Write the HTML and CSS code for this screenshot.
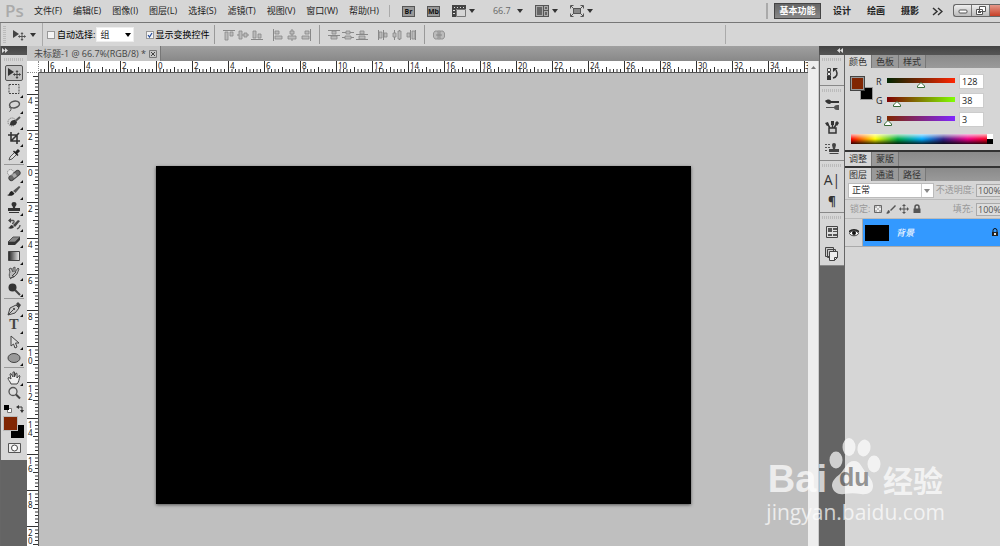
FILE: index.html
```
<!DOCTYPE html>
<html lang="zh-CN">
<head>
    <meta charset="UTF-8">
    <meta name="viewport" content="width=device-width, initial-scale=1.0">
    <title>未标题-1 @ 66.7%(RGB/8)</title>
    <link rel="stylesheet" href="styles.css">
</head>
<body>

    <header class="menubar">
        <span class="logo">Ps</span>
        <nav class="menus">
            <button>文件(F)</button>
            <button>编辑(E)</button>
            <button>图像(I)</button>
            <button>图层(L)</button>
            <button>选择(S)</button>
            <button>滤镜(T)</button>
            <button>视图(V)</button>
            <button>窗口(W)</button>
            <button>帮助(H)</button>
        </nav>
        <div class="app-tools">
            <button class="app-badge">Br</button>
            <button class="app-badge">Mb</button>
            <button class="app-drop" aria-label="查看额外内容">
                <svg width="14" height="12" viewBox="0 0 14 12"><path fill="#444" d="M0 0h14v4H4v8H0z"/><path stroke="#ddd" d="M2 2.500h1M5 2.500h1M8 2.500h1M11 2.500h1M1 5.500h2M1 8.500h2"/><path fill="none" stroke="#777" d="M4.500 4.500h9v7h-9z"/></svg>
                <i class="caret"></i>
            </button>
            <button class="app-drop zoom-level">66.7<i class="caret"></i></button>
            <button class="app-drop" aria-label="排列文档">
                <svg width="14" height="12" viewBox="0 0 14 12"><path fill="#555" d="M0 0h14v12H0z"/><path fill="#aaa" d="M1 1h7v10H1zM9 1h4v4H9zM9 6h4v5H9z"/><path fill="#666" d="M2 2h5v8H2zM10 2h2v2h-2zM10 7h2v3h-2z"/></svg>
                <i class="caret"></i>
            </button>
            <button class="app-drop" aria-label="屏幕模式">
                <svg width="14" height="12" viewBox="0 0 14 12"><path fill="#555" d="M3 3h8v6H3z"/><path fill="#888" d="M4 4h6v4H4z"/><path fill="none" stroke="#555" d="M.5 3.500v-3h3M10.500.5h3v3M13.500 8.500v3h-3M3.500 11.500h-3v-3M1 1l2 2M13 1l-2 2M1 11l2-2M13 11l-2-2"/></svg>
                <i class="caret"></i>
            </button>
        </div>
        <nav class="workspaces">
            <button class="active">基本功能</button>
            <button>设计</button>
            <button>绘画</button>
            <button>摄影</button>
            <button class="more" aria-label="更多">
                <svg width="11" height="9" viewBox="0 0 11 9"><path fill="none" stroke="#333" stroke-width="1.500" d="M1 1l4 3.500L1 8M6 1l4 3.500L6 8"/></svg>
            </button>
        </nav>
        <div class="window-buttons">
            <button aria-label="最小化"><svg width="10" height="8" viewBox="0 0 10 8"><rect x="1" y="3" width="8" height="3" rx="1" fill="#fff" stroke="#555"/></svg></button>
            <button aria-label="还原"><svg width="10" height="9" viewBox="0 0 10 9"><path fill="#fff" stroke="#555" d="M3.500.5h6v5h-6zM.5 3.500h6v5h-6z"/><path fill="#555" d="M2 5h3v2H2z"/></svg></button>
            <button class="close" aria-label="关闭"></button>
        </div>
    </header>

    <div class="options">
        <i class="grip-v"></i>
        <button class="current-tool" aria-label="移动工具">
            <svg width="14" height="12" viewBox="0 0 14 12"><path fill="#444" d="M1 1l6 4-6 4z"/><path fill="none" stroke="#555" d="M10 4v7M6.500 7.500h7"/><path fill="#555" d="M8.500 5L10 3l1.500 2zM8.500 10l1.500 2 1.500-2zM8 6v3L6 7.500zM12 6v3l2-1.500z"/></svg>
            <i class="caret"></i>
        </button>
        <label class="auto-select"><input type="checkbox">自动选择:</label>
        <select aria-label="自动选择"><option>组</option><option>图层</option></select>
        <label class="transform"><input type="checkbox" checked>显示变换控件</label>
        <div class="align-group">
            <button aria-label="顶对齐"><svg viewBox="0 0 12 12"><path class="ln" d="M0 1.500h12"/><path class="bx" d="M2 3h3v8H2zM7 3h3v4H7z"/></svg></button>
            <button aria-label="垂直居中对齐"><svg viewBox="0 0 12 12"><path class="ln" d="M0 6h12"/><path class="bx" d="M2 2h3v8H2zM7 4h3v4H7z"/></svg></button>
            <button aria-label="底对齐"><svg viewBox="0 0 12 12"><path class="ln" d="M0 10.500h12"/><path class="bx" d="M2 2h3v7H2zM7 5h3v4H7z"/></svg></button>
            <i class="space"></i>
            <button aria-label="左对齐"><svg viewBox="0 0 12 12"><path class="ln" d="M1.500 0v12"/><path class="bx" d="M3 2h4v3H3zM3 7h7v3H3z"/></svg></button>
            <button aria-label="水平居中对齐"><svg viewBox="0 0 12 12"><path class="ln" d="M6 0v12"/><path class="bx" d="M4 2h4v3H4zM2 7h8v3H2z"/></svg></button>
            <button aria-label="右对齐"><svg viewBox="0 0 12 12"><path class="ln" d="M10.500 0v12"/><path class="bx" d="M5 2h4v3H5zM2 7h7v3H2z"/></svg></button>
        </div>
        <div class="align-group">
            <button aria-label="按顶分布"><svg viewBox="0 0 12 12"><path class="ln" d="M0 1.500h12M0 6.500h12"/><path class="bx" d="M4 2h4v3H4zM3 7h6v3H3z"/></svg></button>
            <button aria-label="垂直居中分布"><svg viewBox="0 0 12 12"><path class="ln" d="M0 3.500h12M0 8.500h12"/><path class="bx" d="M4 2h4v3H4zM3 7h6v3H3z"/></svg></button>
            <button aria-label="按底分布"><svg viewBox="0 0 12 12"><path class="ln" d="M0 5.500h12M0 10.500h12"/><path class="bx" d="M4 2h4v3H4zM3 7h6v3H3z"/></svg></button>
            <i class="space"></i>
            <button aria-label="按左分布"><svg viewBox="0 0 12 12"><path class="ln" d="M1.500 1v10M6.500 1v10"/><path class="bx" d="M2 3h3v6H2zM7 4h3v4H7z"/></svg></button>
            <button aria-label="水平居中分布"><svg viewBox="0 0 12 12"><path class="ln" d="M3.500 1v10M8.500 1v10"/><path class="bx" d="M2 4h3v4H2zM7 2h3v8H7z"/></svg></button>
            <button aria-label="按右分布"><svg viewBox="0 0 12 12"><path class="ln" d="M5.500 1v10M10.500 1v10"/><path class="bx" d="M2 4h3v4H2zM7 2h3v8H7z"/></svg></button>
        </div>
        <div class="align-group">
            <button aria-label="自动对齐图层"><svg viewBox="0 0 12 12"><path class="bx" d="M2 2h3v8H2L.5 8V4zM7 2h3l1.500 2v4L10 10H7z"/><path class="ln" d="M6 1v10M3 6h6"/></svg></button>
        </div>
        <i class="options-end"></i>
    </div>

    <main class="workspace">
        <aside class="toolbox">
            <div class="toolbox-head"><svg width="6" height="5" viewBox="0 0 6 5"><path fill="#ddd" d="M0 0l3 2.500L0 5zM3 0l3 2.500L3 5z"/></svg></div>
            <div class="tools">
                <i class="grip-h"></i>
                <div class="tool-group six">
                    <button class="tool selected" aria-label="移动"><svg viewBox="0 0 14 14"><path fill="#333" d="M1 2l6 4-6 4z"/><path fill="none" stroke="#444" d="M10 5v7M6.500 8.500h7"/><path fill="#444" d="M8.500 6L10 4l1.500 2zM8.500 11l1.500 2 1.500-2zM8 7v3L6 8.500zM12 7v3l2-1.500z"/></svg></button>
                    <button class="tool more" aria-label="矩形选框"><svg viewBox="0 0 14 14"><path fill="none" stroke="#444" stroke-dasharray="2 1" d="M2 2.500h10v9H2z"/></svg></button>
                    <button class="tool more" aria-label="套索"><svg viewBox="0 0 14 14"><ellipse cx="7.500" cy="5.500" rx="5" ry="3.300" fill="none" stroke="#555" stroke-width="1.500" transform="rotate(-12 7.500 5.500)"/><path fill="none" stroke="#555" d="M3.500 7.500c-2 1 0 2 .5 1.500s0 3-1.500 3.500"/></svg></button>
                    <button class="tool more" aria-label="快速选择"><svg viewBox="0 0 14 14"><circle cx="5" cy="7" r="4" fill="none" stroke="#666" stroke-dasharray="1 1"/><path fill="#333" d="M3 10c0-4 2-5 5-5l2 2c-1 4-4 4-7 3z"/><path stroke="#555" stroke-width="2" d="M8.500 6L13 2"/></svg></button>
                    <button class="tool more" aria-label="裁剪"><svg viewBox="0 0 14 14"><path fill="none" stroke="#333" stroke-width="1.600" d="M4 1v9h9M1 4h9v9M4 10l8-8"/></svg></button>
                    <button class="tool more" aria-label="吸管"><svg viewBox="0 0 14 14"><path fill="#ddd" stroke="#555" d="M2 12l1-3 5-5 2 2-5 5z"/><path stroke="#222" stroke-width="3" d="M8.500 5.500L12 2"/><path stroke="#222" stroke-width="1.500" d="M6.500 3l4.500 4.500"/></svg></button>
                </div>
                <div class="tool-group eight">
                    <button class="tool more" aria-label="修复画笔"><svg viewBox="0 0 14 14"><rect x="1" y="5" width="13" height="5" rx="2.500" fill="#666" stroke="#444" transform="rotate(-40 7.500 7.500)"/><path fill="#aaa" d="M5 7l3-2 2 3-3 2z"/><circle cx="3.500" cy="4.500" r="3" fill="#eee" fill-opacity=".6" stroke="#777" stroke-dasharray="1 1"/></svg></button>
                    <button class="tool more" aria-label="画笔"><svg viewBox="0 0 14 14"><path fill="#222" d="M0 11c3 0 2-4 5-4l2.500 2.500C6 12 3 12.500 0 11z"/><path fill="#555" d="M6 7l6-5 1.500 1L8.500 9z"/></svg></button>
                    <button class="tool more" aria-label="仿制图章"><svg viewBox="0 0 14 14"><path fill="#333" d="M4.500 3a2.500 2 0 015 0c0 2-1.500 2-1.500 4h5v3H1V7h5C6 5 4.500 5 4.500 3zM2 11h10v1H2z"/></svg></button>
                    <button class="tool more" aria-label="历史记录画笔"><svg viewBox="0 0 14 14"><path fill="#333" d="M1 11c2 0 2-3 4-3l2 2c-1 2-4 2-6 1z"/><path fill="#444" d="M6 8l5-5 2 1-5 6z"/><path fill="none" stroke="#555" stroke-width="1.300" d="M2 3.500h4c2 0 1 3-1 3M10 12c2-1 3-2 3-4"/><path fill="#444" d="M4 1v5L1 3.500z"/></svg></button>
                    <button class="tool more" aria-label="橡皮擦"><svg viewBox="0 0 14 14"><path fill="#888" stroke="#555" d="M1 9l5-5h7l-5 5z"/><path fill="#333" d="M1 9h7v3H1zM8 9l5-5v3l-5 5z"/></svg></button>
                    <button class="tool more" aria-label="渐变"><svg viewBox="0 0 14 14"><defs><linearGradient id="toolFade"><stop stop-color="#222"/><stop offset="1" stop-color="#eee"/></linearGradient></defs><path fill="url(#toolFade)" stroke="#444" d="M1.500 2.500h11v9h-11z"/></svg></button>
                    <button class="tool more" aria-label="涂抹"><svg viewBox="0 0 14 14"><path fill="#bbb" stroke="#555" d="M3 12c-1-2-1-4 0-6L2 3l2-1 2 4V2l2-1v5l3-4 1 1-2 5-3 3z"/><path stroke="#444" d="M5 10l4-4M3 13l4-3"/></svg></button>
                    <button class="tool more" aria-label="减淡"><svg viewBox="0 0 14 14"><circle cx="5.500" cy="5.500" r="4" fill="#333"/><path stroke="#444" stroke-width="2" d="M8 8l5 5"/></svg></button>
                </div>
                <div class="tool-group four">
                    <button class="tool more" aria-label="钢笔"><svg viewBox="0 0 14 14"><path fill="#ccc" stroke="#444" d="M1 13l2-7 6-3 3 3-4 5zM1 13l5-5"/><path fill="#444" d="M9 2l2-2 3 3-2 3z"/><circle cx="7" cy="7" r="1" fill="#333"/></svg></button>
                    <button class="tool more type" aria-label="文字">T</button>
                    <button class="tool more" aria-label="路径选择"><svg viewBox="0 0 14 14"><path fill="#ddd" stroke="#444" d="M4 1v10l2.500-2L8 13l2-1-1.500-4H12z"/></svg></button>
                    <button class="tool more" aria-label="椭圆"><svg viewBox="0 0 14 14"><ellipse cx="7" cy="7" rx="6" ry="4.500" fill="#999" stroke="#444"/></svg></button>
                </div>
                <div class="tool-group two">
                    <button class="tool more" aria-label="抓手"><svg viewBox="0 0 14 14"><path fill="#eee" stroke="#444" d="M4 13C3 10 1 9 1 7l1-.5L4 8 3 3l1-.5L6 6V1h1.500v5L9 2l1 .5V7l2-2.500 1 .5c-1 3-1 6-3 8z"/></svg></button>
                    <button class="tool" aria-label="缩放"><svg viewBox="0 0 14 14"><circle cx="6" cy="5.500" r="4" fill="#ddd" stroke="#555" stroke-width="1.300"/><path stroke="#444" stroke-width="2" d="M9 8.500l4 4"/></svg></button>
                </div>
                <div class="swap">
                    <svg width="8" height="8" viewBox="0 0 8 8"><path fill="#fff" stroke="#777" d="M3.500 3.500h4v4h-4z"/><path d="M0 0h5v5H0z"/></svg>
                    <svg width="8" height="8" viewBox="0 0 8 8"><path fill="none" stroke="#333" d="M2 2h4v4"/><path fill="#333" d="M3 0v4L0 2zM4 5h4L6 8z"/></svg>
                </div>
                <div class="swatches tool-swatches"><i class="back"></i><i class="front"></i></div>
                <button class="mask" aria-label="快速蒙版"><svg width="13" height="10" viewBox="0 0 13 10"><path fill="#eee" stroke="#555" d="M.5.5h12v9H.5z"/><circle cx="6.500" cy="5" r="3" fill="#fff" stroke="#444"/></svg></button>
            </div>
        </aside>

        <section class="document">
            <div class="doc-tabs">
                <div class="doc-tab">未标题-1 @ 66.7%(RGB/8) *
                    <button aria-label="关闭文档"><svg width="8" height="8" viewBox="0 0 8 8"><path fill="none" stroke="#777" d="M.5.5h7v7h-7z"/><path stroke="#444" d="M2 2l4 4M6 2L2 6"/></svg></button>
                </div>
            </div>
            <div class="doc-body">
                <div class="corner"></div>
                <div class="ruler-x">
                    <svg class="ticks" width="100%" height="11"><defs><pattern id="ticksX" patternUnits="userSpaceOnUse" x="9" y="0" width="36" height="11"><path stroke="#333" d="M4 8v3M7.500 8v3M11 8v3M14.500 8v3M18.500 6v5M22 8v3M25.500 8v3M29 8v3M32.500 8v3"/></pattern></defs><rect width="100%" height="11" fill="url(#ticksX)"/></svg>
                    <span>6</span><span>4</span><span>2</span><span>0</span><span>2</span><span>4</span><span>6</span><span>8</span><span>10</span><span>12</span><span>14</span><span>16</span><span>18</span><span>20</span><span>22</span><span>24</span><span>26</span><span>28</span><span>30</span><span>32</span><span>34</span><span>3</span>
                </div>
                <div class="scrollbar"><svg width="5" height="3" viewBox="0 0 5 3"><path fill="#777" d="M0 3l2.500-3L5 3z"/></svg></div>
                <div class="ruler-y">
                    <svg class="ticks" width="11" height="100%"><defs><pattern id="ticksY" patternUnits="userSpaceOnUse" x="0" y="21" width="11" height="36"><path stroke="#333" d="M8 4h3M8 7.500h3M8 11h3M8 14.500h3M6 18.500h5M8 22h3M8 25.500h3M8 29h3M8 32.500h3"/></pattern></defs><rect width="11" height="100%" fill="url(#ticksY)"/></svg>
                    <span>4</span><span>2</span><span>0</span><span>2</span><span>4</span><span>6</span><span>8</span><span>10</span><span>12</span><span>14</span><span>16</span><span>18</span><span>20</span>
                </div>
                <div class="pasteboard"><div class="artboard"></div></div>
            </div>
        </section>

        <aside class="side">
            <div class="side-head"><svg width="6" height="5" viewBox="0 0 6 5"><path fill="#ddd" d="M3 0L0 2.500 3 5zM6 0L3 2.500 6 5z"/></svg></div>
            <div class="side-body">
                <div class="dock">
                    <div class="dock-group">
                        <i class="grip-h"></i>
                        <button aria-label="历史记录"><svg viewBox="0 0 14 14"><path fill="#eee" stroke="#444" d="M2.500 1.500h3v3h-3zM2.500 5.500h3v3h-3z"/><path fill="#333" d="M2 9h4v4H2z"/><path fill="none" stroke="#333" stroke-width="1.500" d="M8 11c4-1 5-4 3-8"/><path fill="#333" d="M8 5V1h5z"/></svg></button>
                    </div>
                    <div class="dock-group">
                        <i class="grip-h"></i>
                        <button aria-label="画笔"><svg viewBox="0 0 14 14"><path fill="#333" d="M0 3c2-2 5-2 6 0h8v2H6C5 7 2 6 0 3z"/><path fill="#555" d="M14 12V7c-3 0-4 0-5 2H1v1h8c1 2 2 2 5 2z"/></svg></button>
                        <button aria-label="画笔预设"><svg viewBox="0 0 14 14"><path fill="#ccc" stroke="#333" stroke-width="1.500" d="M4 8h7v5H4z"/><path stroke="#333" stroke-width="1.500" d="M5 8L2 3M7.500 8V1M9 8l3-5"/><path fill="#333" d="M0 3l3-1 1 3-2 1zM10 3l2-2 2 2-2 3zM6 1h3v4H6z"/></svg></button>
                        <button aria-label="仿制源"><svg viewBox="0 0 14 14"><path stroke="#555" stroke-dasharray="2 1" d="M0 2.500h5M0 5.500h5M0 8.500h3"/><path fill="#444" d="M7 3a2 2 0 014 0l-1 4h4v3H4V7h4z"/><path fill="none" stroke="#444" d="M4.500 11.500h9"/></svg></button>
                    </div>
                    <div class="dock-group">
                        <i class="grip-h"></i>
                        <button class="glyph" aria-label="字符">A|</button>
                        <button class="glyph small" aria-label="段落">¶</button>
                    </div>
                    <div class="dock-group">
                        <i class="grip-h"></i>
                        <button aria-label="动作"><svg viewBox="0 0 14 14"><path fill="#ddd" stroke="#444" d="M1.500 1.500h11v11h-11z"/><path fill="#555" d="M3 3h4v4H3zM8 3h4v2H8zM8 6h4v1H8zM3 9h4v2H3zM8 9h4v2H8z"/></svg></button>
                        <button aria-label="图层复合"><svg viewBox="0 0 14 14"><path fill="#ccc" stroke="#444" d="M.5.5h8v9h-8zM2.500 2.500h8v8h-8z"/><path fill="#eee" stroke="#444" d="M4.500 4.500h8v6l-3 3h-5zM9.500 13.500v-3h3"/></svg></button>
                    </div>
                </div>

                <div class="panels">
                    <div class="tabs"><button class="on">颜色</button><button>色板</button><button>样式</button></div>
                    <div class="color-panel">
                        <div class="color-top">
                            <div class="swatches"><i class="back"></i><i class="front"></i></div>
                            <div class="channels">
                                <label for="red">R</label><input id="red" class="red" type="range" min="0" max="255" value="128"><input type="text" value="128" aria-label="R 值">
                                <label for="green">G</label><input id="green" class="green" type="range" min="0" max="255" value="38"><input type="text" value="38" aria-label="G 值">
                                <label for="blue">B</label><input id="blue" class="blue" type="range" min="0" max="255" value="3"><input type="text" value="3" aria-label="B 值">
                            </div>
                        </div>
                        <div class="spectrum"><i></i></div>
                    </div>
                    <div class="tabs short"><button class="on">调整</button><button>蒙版</button></div>
                    <div class="tabs"><button class="on">图层</button><button>通道</button><button>路径</button></div>
                    <div class="layer-options">
                        <select aria-label="混合模式"><option>正常</option></select>
                        <label for="opacity">不透明度:</label><input id="opacity" type="text" value="100%">
                    </div>
                    <div class="layer-options lock-row">
                        <span>锁定:</span>
                        <button aria-label="锁定透明像素"><svg viewBox="0 0 10 10"><path fill="#eee" stroke="#666" d="M1.500 1.500h7v7h-7z"/><path fill="#bbb" d="M2 2h2v2H2zM6 2h2v2H6zM4 4h2v2H4zM2 6h2v2H2zM6 6h2v2H6z"/></svg></button>
                        <button aria-label="锁定图像像素"><svg viewBox="0 0 10 10"><path fill="#555" d="M0 9c2 0 1-3 3-3l1 2c-1 2-3 2-4 1zM4 6l5-5 1 1-5 5z"/></svg></button>
                        <button aria-label="锁定位置"><svg viewBox="0 0 10 10"><path stroke="#555" d="M5 1v8M1 5h8"/><path fill="#555" d="M3 2l2-2 2 2zM3 8l2 2 2-2zM2 3v4L0 5zM8 3v4l2-2z"/></svg></button>
                        <button aria-label="锁定全部"><svg viewBox="0 0 10 10"><path fill="none" stroke="#555" stroke-width="1.500" d="M3 5V3a2 2 0 014 0v2"/><path fill="#555" d="M1.500 4.500h7V9h-7z"/></svg></button>
                        <label for="fill">填充:</label><input id="fill" type="text" value="100%">
                    </div>
                    <div class="layer">
                        <button class="eye" aria-label="显示图层"><svg width="10" height="8" viewBox="0 0 10 8"><path fill="#fff" stroke="#333" d="M.5 4.500C2 1 8 1 9.500 4.500 8 7.500 2 7.500.5 4.500z"/><circle cx="5" cy="4" r="2" fill="#111"/><path fill="none" stroke="#222" stroke-width="1.500" d="M0 3c2-3 8-3 10 0"/></svg></button>
                        <div class="layer-info">
                            <i class="thumb"></i>
                            <span>背景</span>
                            <svg width="8" height="9" viewBox="0 0 8 9"><path fill="none" stroke="#111" d="M2 4V2.500a2 2 0 014 0V4"/><path fill="#222" d="M1 4h6v4H1z"/><path fill="#ddd" d="M3 5h2v2H3z"/></svg>
                        </div>
                    </div>
                </div>
            </div>
        </aside>
    </main>

    <div class="watermark">
        <div class="wm-top">
            <span class="wm-bai">Bai</span>
            <div class="wm-paw">
                <svg width="54" height="58" viewBox="0 0 54 58"><g fill="#fff"><ellipse cx="7" cy="23" rx="6.500" ry="8.500"/><ellipse cx="20" cy="10" rx="6.500" ry="9"/><ellipse cx="35" cy="11" rx="6.500" ry="8.500" transform="rotate(12 35 11)"/><ellipse cx="45" cy="27" rx="6.500" ry="8.500"/><path d="M25 24c-7 0-9 8-14 13-5 4-8 7-8 12 1 6 6 9 12 8 6-1 11-1 17 0 7 1 12-2 12-8 0-5-3-8-6-12-5-5-6-13-13-13z"/></g></svg>
                <span>du</span>
            </div>
            <span class="wm-cn">经验</span>
        </div>
        <div class="wm-url">jingyan.baidu.com</div>
    </div>

</body>
</html>
```
FILE: styles.css
```
* { box-sizing: border-box; }
body {
    margin: 0;
    height: 100vh;
    overflow: hidden;
    display: flex;
    flex-direction: column;
    background: #d6d6d6;
    color: #222;
    font: 9px/12px "Open Sans", "Noto Sans CJK SC", sans-serif;
}
button, input, select { font: inherit; color: inherit; margin: 0; padding: 0; }
button { border: 0; background: none; white-space: nowrap; }
svg { display: block; }
.caret { display: inline-block; border: 3px solid transparent; border-top: 4px solid #333; border-bottom: 0; }

/* menu bar */
.menubar { display: flex; align-items: center; height: 23px; flex: none; background: #d6d6d6; border-bottom: 1px solid #777; }
.logo { width: 34px; padding-left: 5px; font: 600 17px/20px "Open Sans", sans-serif; color: #aaa; }
.menus { display: flex; gap: 11px; padding-right: 10px; border-right: 1px solid #aaa; }
.app-tools { display: flex; align-items: center; gap: 12px; padding-left: 12px; }
.app-badge { width: 13px; height: 11px; background: #999; border: 1px solid #555; color: #111; font-weight: bold; font-size: 7px; line-height: 9px; display: flex; justify-content: center; }
.app-drop { display: flex; align-items: center; gap: 3px; }
.app-drop.zoom-level { gap: 6px; padding-left: 6px; color: #666; }
.workspaces { display: flex; align-items: center; gap: 16px; margin-left: auto; padding-left: 6px; border-left: 2px solid #aaa; font-weight: bold; }
.workspaces .active { width: 47px; height: 16px; margin-right: -4px; border: 1px solid #444; background: linear-gradient(#666, #888); color: #fff; }
.workspaces .more { margin-left: -3px; }
.window-buttons { display: flex; align-self: flex-start; margin: 4px 0 0 10px; height: 13px; border: 1px solid #666; border-right: 0; border-radius: 3px 0 0 3px; background: linear-gradient(#eee, #bbb); overflow: hidden; }
.window-buttons button { width: 18px; display: flex; align-items: center; justify-content: center; border-right: 1px solid #777; }
.window-buttons .close { width: 10px; border: 0; background: linear-gradient(#e5988a, #c63f26); }

/* options bar */
.options { display: flex; align-items: center; height: 23px; flex: none; border-left: 1px solid #999; }
.grip-v { width: 3px; height: 17px; margin-left: 2px; background: repeating-linear-gradient(#bbb 0 1px, #d6d6d6 1px 2px); }
.current-tool { display: flex; align-items: center; gap: 4px; height: 100%; padding: 0 6px; border-right: 1px solid #aaa; }
.options label { display: flex; align-items: center; gap: 2px; color: #000; }
.options input { appearance: none; width: 8px; height: 8px; border: 1px solid #999; background: #f4f4f4; }
.options input:checked { background: #f4f4f4 url("data:image/svg+xml,%3Csvg xmlns='http://www.w3.org/2000/svg' viewBox='0 0 6 6'%3E%3Cpath d='M1 3l1.500 2L5 1' fill='none' stroke='%23234a9a' stroke-width='1.200'/%3E%3C/svg%3E"); }
.auto-select { margin-left: 4px; }
.options select, .layer-options select { appearance: none; border: 1px solid #eee; background: #fff; padding-left: 3px; }
.options select { width: 38px; height: 15px; margin-left: 1px; background: #fff url("data:image/svg+xml,%3Csvg xmlns='http://www.w3.org/2000/svg' width='6' height='4'%3E%3Cpath d='M0 0h6L3 4z'/%3E%3C/svg%3E") no-repeat right 2px center; }
.options .transform { margin: 0 5px 0 12px; gap: 1px; }
.align-group { display: flex; gap: 2px; height: 19px; align-items: center; padding: 0 7px 0 8px; border-left: 1px solid #999; }
.align-group .space { width: 5px; }
.align-group svg { width: 12px; height: 12px; }
.ln { fill: none; stroke: #888; }
.bx { fill: #bbb; stroke: #888; stroke-width: .8; }
.options-end { height: 19px; border-left: 1px solid #aaa; margin: 0 274px 0 auto; }

/* toolbox */
.workspace { display: flex; flex: 1; min-height: 0; }
.toolbox { width: 27px; flex: none; background: #646464; border-left: 1px solid #666; }
.toolbox-head, .side-head { height: 9px; background: linear-gradient(#444, #555); padding: 2px 1px; }
.tools { width: 26px; background: #d6d6d6; padding: 3px 3px 7px; display: flex; flex-direction: column; }
.grip-h { display: block; height: 3px; background: repeating-linear-gradient(90deg, #bbb 0 1px, #d6d6d6 1px 2px); }
.tool-group { display: grid; grid-auto-rows: 1fr; padding: 2px 0 1px; }
.tool-group + .tool-group { border-top: 1px solid #999; }
.six { height: 101px; margin-top: 2px; }
.eight { height: 134px; }
.four { height: 69px; }
.two { height: 35px; }
.tool { position: relative; display: flex; align-items: center; justify-content: center; min-height: 0; }
.tool svg { width: 14px; height: 14px; }
.tool.more::after { content: ""; position: absolute; right: 1px; bottom: 0; border: solid #111; border-width: 0 0 3px 3px; border-left-color: transparent; }
.tool.selected { width: 18px; margin-left: 1px; border: 1px solid #555; border-radius: 2px; background: #c2c2c2; }
.type { font: bold 14px/14px "Liberation Serif", serif; color: #444; }
.swap { display: flex; justify-content: space-between; margin-top: 3px; }
.swatches { position: relative; width: 22px; height: 23px; flex: none; }
.swatches i { position: absolute; width: 13px; height: 13px; }
.swatches .front { left: 0; top: 0; background: #802603; outline: 1px solid #bbb; }
.swatches .back { right: 0; bottom: 0; background: #000; }
.tool-swatches { margin-top: 4px; width: 20px; height: 21px; }
.mask { align-self: center; margin-top: 5px; }

/* document */
.document { flex: 1; min-width: 0; display: flex; flex-direction: column; }
.doc-tabs { height: 15px; flex: none; background: linear-gradient(#a0a0a0, #888); display: flex; }
.doc-tab { display: flex; align-items: center; gap: 3px; padding: 0 3px 0 7px; background: #c6c6c6; border-right: 1px solid #777; color: #444; white-space: nowrap; }
.doc-body { flex: 1; min-height: 0; display: grid; grid-template: 12px minmax(0, 1fr) / 12px minmax(0, 1fr) 11px; }
.corner, .ruler-x, .ruler-y { background: #fff; border: solid #555; border-width: 0 1px 1px 0; }
.corner { border-style: dotted; border-color: #888; }
.ruler-x, .ruler-y { position: relative; overflow: hidden; display: flex; font: 8px/8px "Noto Sans", sans-serif; }
.ruler-x { padding-left: 9px; border-right: 0; }
.ruler-y { flex-direction: column; padding-top: 21px; border-bottom: 0; }
.ticks { position: absolute; left: 0; top: 0; }
.ruler-x span { flex: 0 0 36px; border-left: 1px solid #333; padding: 1px 0 0 1px; }
.ruler-x span:last-child { padding-left: 0; }
.ruler-y span { flex: 0 0 36px; border-top: 1px solid #333; padding: 2px 4px 0 1px; word-break: break-all; }
.scrollbar { grid-row: 1 / 3; grid-column: 3; background: #eee; border-right: 1px solid #ccc; display: flex; justify-content: center; padding-top: 5px; }
.pasteboard { background: #bfbfbf; display: flex; justify-content: center; padding-top: 93px; overflow: hidden; }
.artboard { width: 535px; height: 338px; flex: none; background: #000; box-shadow: 0 1px 3px #555; }

/* right side */
.side { width: 181px; flex: none; display: flex; flex-direction: column; }
.side-head { padding-left: 18px; }
.side-body { flex: 1; display: flex; min-height: 0; background: #d6d6d6; }
.dock { width: 26px; flex: none; background: #646464; border: solid #666; border-width: 0 1px; }
.dock-group { background: #d6d6d6; padding: 3px 2px 0; display: flex; flex-direction: column; align-items: center; border-bottom: 1px solid #888; }
.dock-group .grip-h { width: 20px; margin-bottom: 2px; }
.dock-group button { height: 22px; display: flex; align-items: center; }
.dock-group svg { width: 14px; height: 14px; }
.dock-group .glyph { font: 14px/16px "Open Sans", sans-serif; color: #333; }
.dock-group .glyph.small { font-weight: bold; font-size: 12px; height: 21px; }

.panels { flex: 1; min-width: 0; overflow: hidden; }
.tabs { display: flex; height: 13px; background: linear-gradient(#8a8a8a, #9a9a9a); }
.tabs button { padding: 0 4px; border-right: 1px solid #777; background: #999; color: #333; line-height: 12px; }
.tabs .on { background: #d6d6d6; }
.tabs.short { height: 16px; border-bottom: 2px solid #333; }
.color-panel { height: 84px; padding: 6px 7px 0 6px; border-bottom: 2px solid #333; }
.color-top { display: flex; }
.color-panel .swatches { margin-top: 3px; }
.color-panel .swatches i { border: 1px solid #999; }
.color-panel .swatches .front { outline: 1px solid #444; }
.channels { display: grid; grid-template-columns: 7px 76px 25px; grid-auto-rows: 15px; row-gap: 4px; align-items: center; margin-left: 3px; font-size: 9px; }
.channels input[type=text] { width: 25px; height: 15px; border: 1px solid #ccc; background: #fff; padding-left: 2px; font-size: 9px; }
.channels input[type=range] { appearance: none; width: 76px; height: 11px; background: none; margin-top: 4px; }
.channels input::-webkit-slider-runnable-track { height: 11px; background: linear-gradient(90deg, var(--from), var(--to)) no-repeat 4px 0 / calc(100% - 8px) 5px; }
.channels input::-webkit-slider-thumb { appearance: none; width: 8px; height: 6px; margin-top: 4px; background: url("data:image/svg+xml,%3Csvg xmlns='http://www.w3.org/2000/svg' width='8' height='6'%3E%3Cpath d='M4 .5L7.500 4v1.500h-7V4z' fill='%23fff' stroke='%23386b38'/%3E%3C/svg%3E"); }
.red { --from: #002603; --to: #ff2603; }
.green { --from: #800003; --to: #80ff03; }
.blue { --from: #802600; --to: #8026ff; }
.spectrum { display: flex; justify-content: flex-end; height: 10px; width: 142px; margin-top: 7px; background: linear-gradient(#fffb, #fff0 50%, #0000 50%, #000c), linear-gradient(90deg, #f00, #ff0 17%, #0a4 33%, #0af 50%, #328 65%, #e08 82%, #f00); }
.spectrum i { width: 6px; background: linear-gradient(#fff 50%, #000 50%); }

.layer-options { display: flex; align-items: center; height: 19px; padding-left: 3px; white-space: nowrap; color: #999; border-bottom: 1px solid #bbb; }
.layer-options select { width: 87px; height: 15px; margin-right: 2px; border-color: #bbb; color: #333; background: #fff url("data:image/svg+xml,%3Csvg xmlns='http://www.w3.org/2000/svg' width='12' height='13'%3E%3Cpath d='M.5 0v13' stroke='%23ccc'/%3E%3Cpath d='M3 5h6L6 9z' fill='%23888'/%3E%3C/svg%3E") no-repeat right center; }
.layer-options label { margin-left: auto; }
.layer-options input { width: 24px; height: 13px; margin-left: 2px; flex: none; border: 1px solid #aaa; border-right: 0; background: #ddd; color: #555; padding-left: 1px; }
.lock-row { gap: 3px; padding-left: 5px; }
.lock-row input { margin-left: 0; }
.lock-row svg { width: 10px; height: 10px; }
.layer { display: flex; height: 28px; border-bottom: 1px solid #aaa; }
.eye { width: 18px; display: flex; align-items: center; justify-content: center; border-right: 1px solid #aaa; }
.layer-info { flex: 1; display: flex; align-items: center; gap: 7px; padding: 0 1px 0 2px; background: #3399ff; color: #fff; font-style: italic; }
.layer-info .thumb { width: 24px; height: 16px; background: #000; }
.layer-info svg { margin-left: auto; }

/* watermark over the lower right corner */
.watermark { position: absolute; right: 55px; bottom: 22px; color: #fff; opacity: .7; pointer-events: none; }
.wm-top { display: flex; align-items: flex-end; justify-content: flex-end; height: 60px; padding-right: 2px; }
.wm-bai { font: bold 38px/42px "Liberation Sans", sans-serif; }
.wm-paw { position: relative; margin: 0 0 5px 2px; }
.wm-paw span { position: absolute; left: 10px; top: 27px; color: #777; font: bold 25px/26px "Liberation Sans", sans-serif; }
.wm-cn { font: bold 30px/41px "Noto Sans CJK SC", sans-serif; }
.wm-url { font: 21px/24px "Open Sans", sans-serif; }
```
